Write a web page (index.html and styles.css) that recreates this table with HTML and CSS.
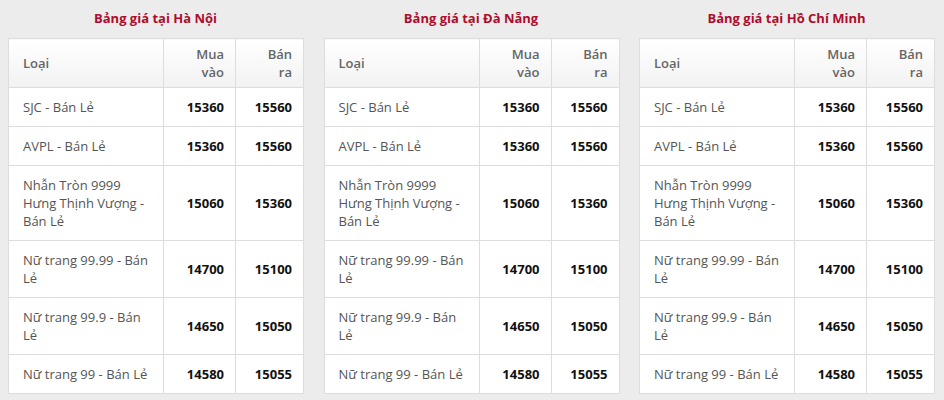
FILE: index.html
```html
<!DOCTYPE html>
<html lang="vi">
<head>
<meta charset="utf-8">
<link rel="stylesheet" href="styles.css">
</head>
<body>
<div class="grid">
  <section class="region">
    <h3 class="title">Bảng giá tại Hà Nội</h3>
    <table class="prices">
      <colgroup><col class="c-type"><col class="c-buy"><col class="c-sell"></colgroup>
      <thead><tr><th class="left">Loại</th><th>Mua vào</th><th>Bán ra</th></tr></thead>
      <tbody>
        <tr><td class="left">SJC - Bán Lẻ</td><td>15360</td><td>15560</td></tr>
        <tr><td class="left">AVPL - Bán Lẻ</td><td>15360</td><td>15560</td></tr>
        <tr><td class="left">Nhẫn Tròn 9999 Hưng Thịnh Vượng - Bán Lẻ</td><td>15060</td><td>15360</td></tr>
        <tr><td class="left">Nữ trang 99.99 - Bán Lẻ</td><td>14700</td><td>15100</td></tr>
        <tr><td class="left">Nữ trang 99.9 - Bán Lẻ</td><td>14650</td><td>15050</td></tr>
        <tr><td class="left">Nữ trang 99 - Bán Lẻ</td><td>14580</td><td>15055</td></tr>
      </tbody>
    </table>
  </section>
  <section class="region">
    <h3 class="title">Bảng giá tại Đà Nẵng</h3>
    <table class="prices">
      <colgroup><col class="c-type"><col class="c-buy"><col class="c-sell"></colgroup>
      <thead><tr><th class="left">Loại</th><th>Mua vào</th><th>Bán ra</th></tr></thead>
      <tbody>
        <tr><td class="left">SJC - Bán Lẻ</td><td>15360</td><td>15560</td></tr>
        <tr><td class="left">AVPL - Bán Lẻ</td><td>15360</td><td>15560</td></tr>
        <tr><td class="left">Nhẫn Tròn 9999 Hưng Thịnh Vượng - Bán Lẻ</td><td>15060</td><td>15360</td></tr>
        <tr><td class="left">Nữ trang 99.99 - Bán Lẻ</td><td>14700</td><td>15100</td></tr>
        <tr><td class="left">Nữ trang 99.9 - Bán Lẻ</td><td>14650</td><td>15050</td></tr>
        <tr><td class="left">Nữ trang 99 - Bán Lẻ</td><td>14580</td><td>15055</td></tr>
      </tbody>
    </table>
  </section>
  <section class="region">
    <h3 class="title">Bảng giá tại Hồ Chí Minh</h3>
    <table class="prices">
      <colgroup><col class="c-type"><col class="c-buy"><col class="c-sell"></colgroup>
      <thead><tr><th class="left">Loại</th><th>Mua vào</th><th>Bán ra</th></tr></thead>
      <tbody>
        <tr><td class="left">SJC - Bán Lẻ</td><td>15360</td><td>15560</td></tr>
        <tr><td class="left">AVPL - Bán Lẻ</td><td>15360</td><td>15560</td></tr>
        <tr><td class="left">Nhẫn Tròn 9999 Hưng Thịnh Vượng - Bán Lẻ</td><td>15060</td><td>15360</td></tr>
        <tr><td class="left">Nữ trang 99.99 - Bán Lẻ</td><td>14700</td><td>15100</td></tr>
        <tr><td class="left">Nữ trang 99.9 - Bán Lẻ</td><td>14650</td><td>15050</td></tr>
        <tr><td class="left">Nữ trang 99 - Bán Lẻ</td><td>14580</td><td>15055</td></tr>
      </tbody>
    </table>
  </section>
</div>
</body>
</html>
```
FILE: styles.css
```css
html, body {
  margin: 0;
  padding: 0;
  background: #ececec;
}
body {
  font-family: "Open Sans", "Liberation Sans", sans-serif;
  font-size: 13px;
  line-height: 18px;
  color: #555;
}
.grid {
  display: grid;
  grid-template-columns: 295px 295px 295px;
  column-gap: 20.5px;
  padding: 8px 0 0 8px;
}
.title {
  margin: 0;
  height: 30px;
  line-height: 20px;
  text-align: center;
  font-size: 13px;
  font-weight: 700;
  color: #ad0c2c;
}
.prices {
  width: 295px;
  table-layout: fixed;
  border-collapse: collapse;
  background: #fff;
  border: 1px solid #ddd;
}
.c-type { width: 155px; }
.c-buy { width: 72px; }
.c-sell { width: 68px; }
.prices th, .prices td {
  border: 1px solid #ddd;
  padding: 10px 11px 10px 14px;
  text-align: right;
  vertical-align: middle;
}
.prices th {
  padding: 6px 11px 6px 22px;
  font-weight: 600;
  color: #666;
  background: linear-gradient(#ffffff, #f2f2f2);
}
.prices td {
  font-weight: 700;
  color: #111;
}
.prices .left {
  text-align: left;
  font-weight: 400;
  color: #555;
}
.prices th.left {
  padding-left: 14px;
  font-weight: 600;
  color: #666;
}
```
